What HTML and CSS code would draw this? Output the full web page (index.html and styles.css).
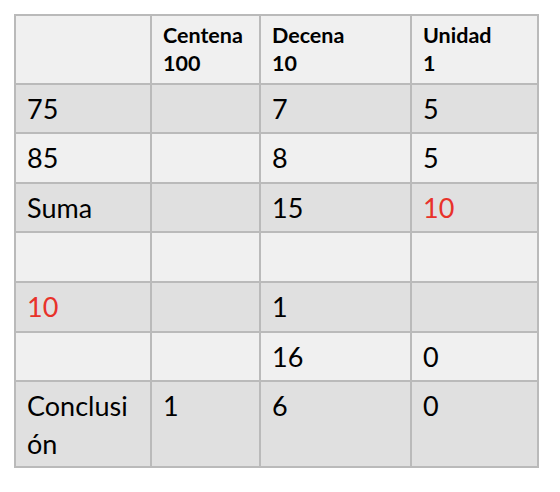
FILE: index.html
```
<!DOCTYPE html>
<html lang="es">
<head>
<meta charset="utf-8">
<link rel="stylesheet" href="styles.css">
</head>
<body>
<table class="grid">
  <colgroup>
    <col class="c1"><col class="c2"><col class="c3"><col class="c4">
  </colgroup>
  <thead>
    <tr class="head">
      <th></th>
      <th>Centena<br>100</th>
      <th>Decena<br>10</th>
      <th>Unidad<br>1</th>
    </tr>
  </thead>
  <tbody>
    <tr class="dark short"><td>75</td><td></td><td>7</td><td>5</td></tr>
    <tr class="light"><td>85</td><td></td><td>8</td><td>5</td></tr>
    <tr class="dark short"><td>Suma</td><td></td><td>15</td><td class="red">10</td></tr>
    <tr class="light"><td></td><td></td><td></td><td></td></tr>
    <tr class="dark"><td class="red">10</td><td></td><td>1</td><td></td></tr>
    <tr class="light short"><td></td><td></td><td>16</td><td>0</td></tr>
    <tr class="dark tall"><td>Conclusi<wbr>ón</td><td>1</td><td>6</td><td>0</td></tr>
  </tbody>
</table>
</body>
</html>
```
FILE: styles.css
```
html, body {
  margin: 0;
  background: #ffffff;
}
body {
  padding: 14px;
  font-family: Lato, "Open Sans", sans-serif;
  color: #000;
}
.grid {
  border-collapse: collapse;
  table-layout: fixed;
  width: 523px;
}
.c1 { width: 136px; }
.c2 { width: 109px; }
.c3 { width: 151px; }
.c4 { width: 127px; }
.grid th, .grid td {
  border: 2px solid #bababa;
  padding: 0 4px 0 11px;
  vertical-align: top;
  text-align: left;
}
.grid th {
  font-weight: 700;
  font-size: 21.5px;
  line-height: 28px;
  padding-top: 5px;
  height: 62px;
  background: #f0f0f0;
}
.grid td {
  font-size: 27px;
  line-height: 37.5px;
  padding-top: 5px;
  height: 43px;
}
.short td { height: 42px; }
.dark td { background: #e0e0e0; }
.light td { background: #f0f0f0; }
.tall td { height: 79px; }
.red { color: #e8322a; }
```
